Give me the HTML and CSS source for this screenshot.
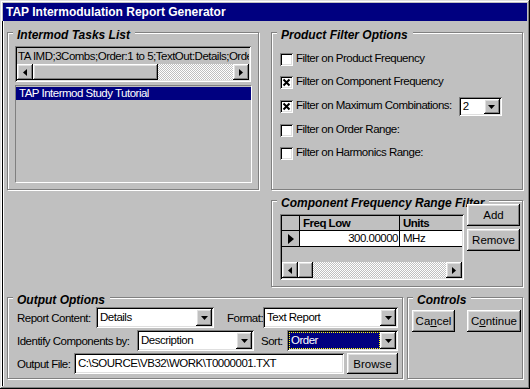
FILE: index.html
```html
<!DOCTYPE html>
<html lang="en">
<head>
    <meta charset="UTF-8">
    <title>TAP Intermodulation Report Generator</title>
    <link rel="stylesheet" href="styles.css">
</head>
<body>
    <div class="window">
        <div class="titlebar">TAP Intermodulation Report Generator</div>
        <div class="client">
            <div class="top-row">
                <div class="group tasks">
                    <span class="group-title">Intermod Tasks List</span>
                    <div class="task-box">
                        <div class="task-line">TA IMD;3Combs;Order:1 to 5;TextOut:Details;Order:Asc</div>
                        <div class="hscroll">
                            <span class="sb-btn"><svg width="4" height="7" viewBox="0 0 4 7"><path d="M4 0v7L0 3.5z"/></svg></span>
                            <span class="sb-thumb thumb-wide"></span>
                            <span class="sb-track"></span>
                            <span class="sb-btn"><svg width="4" height="7" viewBox="0 0 4 7"><path d="M0 0v7l4-3.5z"/></svg></span>
                        </div>
                    </div>
                    <div class="listbox">
                        <div class="list-item selected">TAP Intermod Study Tutorial</div>
                    </div>
                </div>

                <div class="right-col">
                    <div class="group filters">
                        <span class="group-title">Product Filter Options</span>
                        <div class="check-row">
                            <span class="checkbox"></span>
                            <span class="check-label">Filter on Product Frequency</span>
                        </div>
                        <div class="check-row">
                            <span class="checkbox"><svg width="9" height="9" viewBox="0 0 9 9"><path d="M1.5 1.5l6 6M7.5 1.5l-6 6"/></svg></span>
                            <span class="check-label">Filter on Component Frequency</span>
                        </div>
                        <div class="check-row tall">
                            <span class="checkbox"><svg width="9" height="9" viewBox="0 0 9 9"><path d="M1.5 1.5l6 6M7.5 1.5l-6 6"/></svg></span>
                            <span class="check-label">Filter on Maximum Combinations:</span>
                            <div class="combo combo-count">
                                <span class="combo-text">2</span>
                                <span class="combo-btn"><svg width="7" height="4" viewBox="0 0 7 4"><path d="M0 0h7L3.5 4z"/></svg></span>
                            </div>
                        </div>
                        <div class="check-row">
                            <span class="checkbox"></span>
                            <span class="check-label">Filter on Order Range:</span>
                        </div>
                        <div class="check-row">
                            <span class="checkbox"></span>
                            <span class="check-label">Filter on Harmonics Range:</span>
                        </div>
                    </div>

                    <div class="group component">
                        <span class="group-title">Component Frequency Range Filter</span>
                        <div class="grid">
                            <div class="grid-row grid-head">
                                <span class="gc gc-sel"></span>
                                <span class="gc gc-freq">Freq Low</span>
                                <span class="gc gc-units">Units</span>
                            </div>
                            <div class="grid-row grid-data">
                                <span class="gc gc-sel"><svg width="6" height="10" viewBox="0 0 6 10"><path d="M0 0v10l6-5z"/></svg></span>
                                <span class="gc gc-freq">300.00000</span>
                                <span class="gc gc-units">MHz</span>
                            </div>
                            <div class="grid-empty"></div>
                            <div class="hscroll">
                                <span class="sb-btn"><svg width="4" height="7" viewBox="0 0 4 7"><path d="M4 0v7L0 3.5z"/></svg></span>
                                <span class="sb-thumb thumb-small"></span>
                                <span class="sb-track"></span>
                                <span class="sb-btn"><svg width="4" height="7" viewBox="0 0 4 7"><path d="M0 0v7l4-3.5z"/></svg></span>
                            </div>
                        </div>
                        <div class="side-buttons">
                            <button class="btn btn-side">Add</button>
                            <button class="btn btn-side">Remove</button>
                        </div>
                    </div>
                </div>
            </div>

            <div class="bottom-row">
                <div class="group output">
                    <span class="group-title">Output Options</span>
                    <div class="form-row">
                        <span class="lbl lbl-report">Report Content:</span>
                        <div class="combo combo-report">
                            <span class="combo-text">Details</span>
                            <span class="combo-btn"><svg width="7" height="4" viewBox="0 0 7 4"><path d="M0 0h7L3.5 4z"/></svg></span>
                        </div>
                        <span class="lbl lbl-format">Format:</span>
                        <div class="combo combo-format">
                            <span class="combo-text">Text Report</span>
                            <span class="combo-btn"><svg width="7" height="4" viewBox="0 0 7 4"><path d="M0 0h7L3.5 4z"/></svg></span>
                        </div>
                    </div>
                    <div class="form-row">
                        <span class="lbl lbl-identify">Identify Components by:</span>
                        <div class="combo combo-identify">
                            <span class="combo-text">Description</span>
                            <span class="combo-btn"><svg width="7" height="4" viewBox="0 0 7 4"><path d="M0 0h7L3.5 4z"/></svg></span>
                        </div>
                        <span class="lbl lbl-sort">Sort:</span>
                        <div class="combo combo-sort">
                            <span class="combo-text focused"><span class="focus-rect">Order</span></span>
                            <span class="combo-btn"><svg width="7" height="4" viewBox="0 0 7 4"><path d="M0 0h7L3.5 4z"/></svg></span>
                        </div>
                    </div>
                    <div class="form-row">
                        <span class="lbl lbl-file">Output File:</span>
                        <div class="textbox">C:\SOURCE\VB32\WORK\T0000001.TXT</div>
                        <button class="btn btn-browse">Browse</button>
                    </div>
                </div>

                <div class="group controls">
                    <span class="group-title">Controls</span>
                    <button class="btn btn-cancel">Ca<u>n</u>cel</button>
                    <button class="btn btn-continue">C<u>o</u>ntinue</button>
                </div>
            </div>
        </div>
    </div>
</body>
</html>
```

FILE: styles.css
```css
* {
    margin: 0;
    padding: 0;
    box-sizing: border-box;
}

body {
    width: 530px;
    height: 389px;
    overflow: hidden;
    background: #c0c0c0;
    color: #000;
    font-family: "Liberation Sans", Arial, sans-serif;
    font-size: 11.5px;
    letter-spacing: -0.5px;
}

/* window frame */
.window {
    width: 530px;
    height: 389px;
    padding: 3px 3px 3px 2px;
    background: #c0c0c0;
    display: flex;
    flex-direction: column;
    box-shadow: inset -1px -1px #000, inset 1px 1px #dfdfdf,
                inset -2px -2px #808080, inset 2px 2px #fff;
}

.titlebar {
    height: 18px;
    margin-left: 1px;
    padding-left: 3px;
    background: #000080;
    color: #fff;
    letter-spacing: 0;
    font: bold 12px/18px "Liberation Sans", Arial, sans-serif;
}

.client {
    flex: 1;
    padding: 11px 4px 0;
    border-left: 1px solid #000;
    box-shadow: inset 1px 0 #fff;
    display: flex;
    flex-direction: column;
    gap: 10px;
}

.top-row {
    display: flex;
    align-items: flex-start;
    gap: 12px;
}

.bottom-row {
    display: flex;
    gap: 4px;
}

/* etched group frame */
.group {
    position: relative;
    border: 1px solid #808080;
    box-shadow: inset 1px 1px #fff, 1px 1px #fff;
}

.group-title {
    position: absolute;
    top: -5px;
    left: 5px;
    padding: 0 5px 0 4px;
    background: #c0c0c0;
    white-space: nowrap;
    letter-spacing: 0;
    font: italic bold 12px/14px "Liberation Sans", Arial, sans-serif;
}

/* shared 3d bits */
.sb-btn,
.sb-thumb,
.btn,
.combo-btn {
    background: #c0c0c0;
    box-shadow: inset -1px -1px #000, inset 1px 1px #fff,
                inset -2px -2px #808080, inset 2px 2px #dfdfdf;
}

.task-box,
.checkbox,
.combo,
.textbox,
.grid {
    box-shadow: inset 1px 1px #808080, inset -1px -1px #fff,
                inset 2px 2px #000, inset -2px -2px #dfdfdf;
}

.hscroll {
    display: flex;
    height: 16px;
}

.sb-btn {
    width: 16px;
    height: 16px;
    display: flex;
    align-items: center;
    justify-content: center;
}

.sb-btn svg,
.combo-btn svg,
.gc-sel svg {
    fill: #000;
}

.sb-thumb {
    height: 16px;
}

.thumb-wide {
    width: 125px;
}

.thumb-small {
    width: 15px;
}

.sb-track {
    flex: 1;
    background-image: repeating-conic-gradient(#fff 0 25%, #c0c0c0 0 50%);
    background-size: 2px 2px;
}

/* tasks list */
.tasks {
    width: 252px;
    height: 158px;
    padding: 13px 0 0 7px;
}

.task-box {
    width: 236px;
    height: 36px;
    padding: 2px;
    background: #c0c0c0;
}

.task-line {
    height: 16px;
    line-height: 16px;
    padding-left: 1px;
    white-space: nowrap;
    overflow: hidden;
}

.listbox {
    width: 237px;
    height: 98px;
    margin-top: 3px;
    padding-top: 1px;
    border: 1px solid;
    border-color: #808080 #fff #fff #808080;
}

.list-item {
    height: 13px;
    line-height: 13px;
    padding-left: 3px;
    white-space: nowrap;
}

.list-item.selected {
    background: #000080;
    color: #fff;
}

/* right column */
.right-col {
    width: 252px;
    display: flex;
    flex-direction: column;
    gap: 10px;
}

.filters {
    height: 158px;
    padding: 15px 0 0 8px;
}

.check-row {
    height: 23px;
    display: flex;
    align-items: center;
    gap: 3px;
    white-space: nowrap;
}

.check-row.tall {
    height: 25px;
}

.check-label {
    margin-bottom: 3px;
}

.checkbox {
    width: 13px;
    height: 13px;
    flex: none;
    background: #fff;
    display: flex;
    align-items: center;
    justify-content: center;
}

.checkbox svg {
    stroke: #000;
    stroke-width: 2;
}

/* combos */
.combo {
    height: 21px;
    padding: 2px;
    background: #fff;
    display: flex;
    flex: none;
}

.combo-text {
    flex: 1;
    padding-left: 2px;
    line-height: 17px;
    white-space: nowrap;
    overflow: hidden;
}

.combo-btn {
    width: 16px;
    height: 17px;
    display: flex;
    align-items: center;
    justify-content: center;
}

.combo-count {
    width: 43px;
    height: 19px;
    margin-left: 4px;
}

.combo-count .combo-text {
    line-height: 15px;
}

.combo-count .combo-btn {
    height: 15px;
}

.combo-report {
    width: 118px;
}

.combo-format {
    width: 135px;
}

.combo-identify {
    width: 117px;
}

.combo-sort {
    width: 111px;
}

.combo-text.focused {
    padding: 0;
}

.focus-rect {
    display: block;
    height: 17px;
    padding-left: 1px;
    line-height: 15px;
    background: #000080;
    color: #fff;
    border: 1px dotted #ffff00;
}

/* component frequency */
.component {
    height: 87px;
    padding: 3px 0 0 8px;
    display: flex;
    align-items: flex-start;
    gap: 3px;
}

.grid {
    width: 184px;
    height: 66px;
    margin-top: 10px;
    padding: 2px;
    background: #c0c0c0;
    display: flex;
    flex-direction: column;
}

.grid-row {
    display: flex;
    border-bottom: 1px solid #000;
}

.grid-head {
    height: 15px;
    font-weight: bold;
    line-height: 14px;
}

.grid-data {
    height: 16px;
    line-height: 15px;
}

.gc {
    white-space: nowrap;
    overflow: hidden;
}

.gc-sel {
    width: 18px;
    border-right: 1px solid #000;
    display: flex;
    align-items: center;
    justify-content: center;
}

.gc-freq {
    width: 100px;
    padding-left: 3px;
    border-right: 1px solid #000;
}

.gc-units {
    flex: 1;
    padding-left: 3px;
}

.grid-data .gc-freq {
    background: #fff;
    text-align: right;
    padding: 0 1px 0 0;
}

.grid-data .gc-units {
    background: #fff;
}

.grid-empty {
    height: 15px;
}

.side-buttons {
    position: relative;
    z-index: 1;
    display: flex;
    flex-direction: column;
    gap: 3px;
}

/* buttons */
.btn {
    border: none;
    font: inherit;
    color: #000;
    text-align: center;
}

.btn u {
    text-decoration: underline;
}

.btn-side {
    width: 53px;
    height: 22px;
}

/* output options */
.output {
    width: 396px;
    height: 82px;
    padding: 9px 0 0 9px;
    display: flex;
    flex-direction: column;
    gap: 2px;
}

.form-row {
    height: 21px;
    display: flex;
    align-items: center;
}

.lbl {
    white-space: nowrap;
    flex: none;
}

.lbl-report {
    width: 79px;
}

.lbl-format {
    width: 49px;
    padding-left: 13px;
}

.lbl-identify {
    width: 120px;
}

.lbl-sort {
    width: 33px;
    padding-left: 7px;
}

.lbl-file {
    width: 57px;
}

.textbox {
    width: 270px;
    height: 21px;
    padding: 0 0 0 4px;
    line-height: 21px;
    background: #fff;
    white-space: nowrap;
    overflow: hidden;
}

.btn-browse {
    width: 51px;
    height: 21px;
    margin-left: 3px;
}

/* controls */
.controls {
    width: 116px;
    height: 82px;
    padding: 12px 0 0 4px;
    display: flex;
    align-items: flex-start;
    gap: 12px;
}

.btn-cancel {
    width: 43px;
    height: 22px;
}

.btn-continue {
    width: 54px;
    height: 22px;
}
```
